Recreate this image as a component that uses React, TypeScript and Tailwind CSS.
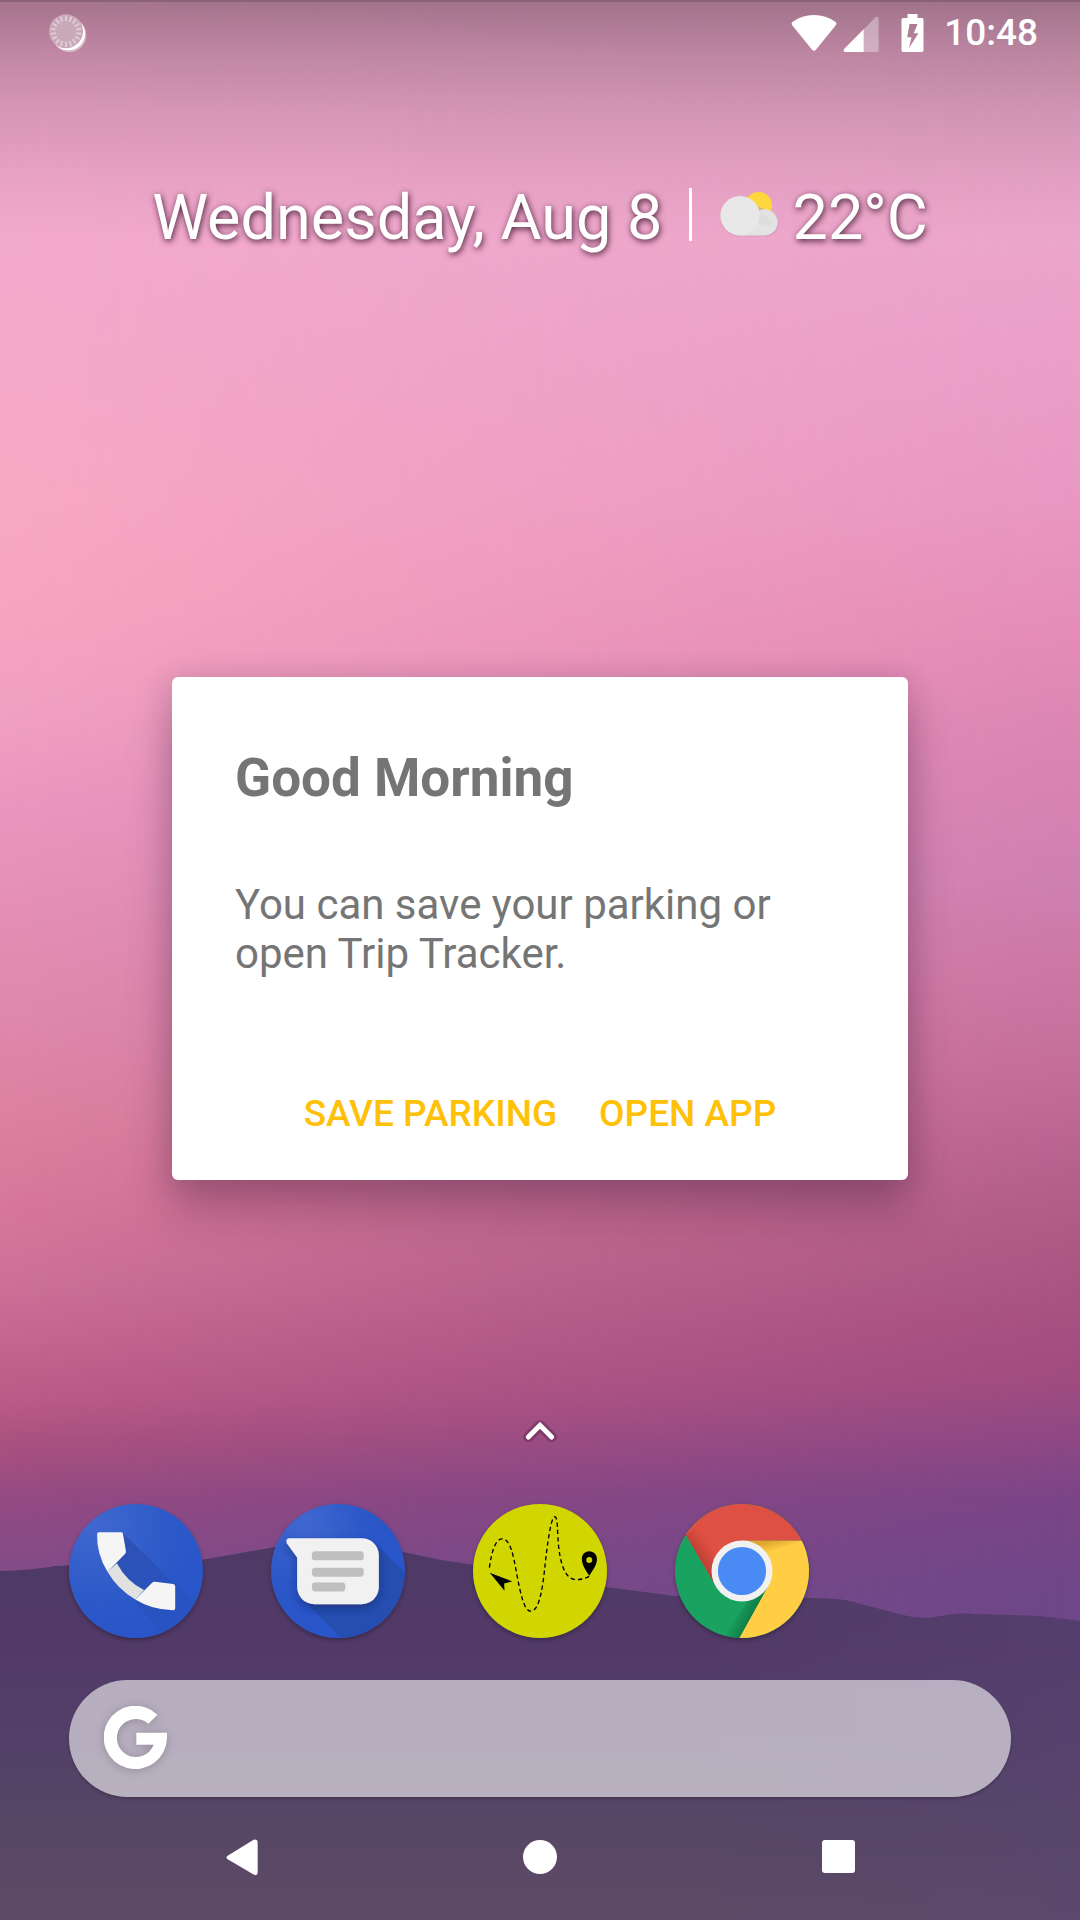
import React from "react";

function Wallpaper() {
  return (
    <div className="absolute inset-0 overflow-hidden" aria-hidden="true">
      <div className="absolute inset-0 bg-[linear-gradient(to_bottom,#eeaacd_0%,#eca6cb_12%,#eba0ca_17%,#e898c3_26%,#e58cb8_33%,#da85b3_39%,#cf80b0_46%,#cb77a4_51%,#c46d9a_56%,#b96390_60%,#ae5b86_64%,#a65081_69%,#9f4c80_72%,#8e4885_75%,#7b4587_78%,#6e4789_83%,#6e4789_100%)]" />
      <div className="absolute inset-0 bg-[linear-gradient(to_bottom,#f4abd0_0%,#f3a9cc_13%,#f4a8c8_19%,#f7a8c2_26%,#f6a6bf_31%,#f0a0c0_37%,#e996bf_42%,#e38eb4_48%,#df88ac_53%,#dc819f_58%,#d67799_63%,#cc7097_67%,#ba5a87_73%,#aa527f_75%,#944a82_78%,#824c88_82%,#824c88_100%)] [mask-image:linear-gradient(to_right,black,rgba(0,0,0,0.5)_45%,transparent)]" />
      <svg className="absolute inset-0 h-full w-full" viewBox="0 0 1080 1920" preserveAspectRatio="none">
        <defs>
          <linearGradient id="hill" x1="0" y1="0" x2="0" y2="1">
            <stop offset="0" stopColor="#4e3965" />
            <stop offset="0.3" stopColor="#523a68" />
            <stop offset="0.55" stopColor="#534068" />
            <stop offset="0.75" stopColor="#574665" />
            <stop offset="1" stopColor="#5d4a66" />
          </linearGradient>
          <linearGradient id="hillTint" x1="0" y1="0" x2="1" y2="0">
            <stop offset="0.4" stopColor="#5a4575" stopOpacity="0" />
            <stop offset="1" stopColor="#5a4575" stopOpacity="0.4" />
          </linearGradient>
        </defs>
        <path id="ridge" fill="url(#hill)" d="M0 1571Q35 1570 55 1566L100 1564Q170 1566 207 1559L275 1547Q330 1532 403 1552L441 1560L475 1565L606 1587L675 1596L813 1598Q840 1598 854 1602L895 1613Q920 1620 935 1617Q955 1612 975 1614L1040 1616L1080 1621V1920H0Z" />
        <path fill="url(#hillTint)" d="M606 1587L675 1596L813 1598Q840 1598 854 1602L895 1613Q920 1620 935 1617Q955 1612 975 1614L1040 1616L1080 1621V1920H432V1700Z" />
      </svg>
      <div className="absolute inset-x-0 top-0 h-[240px] bg-[linear-gradient(to_bottom,rgba(0,0,0,0.33),rgba(0,0,0,0.21)_22%,rgba(0,0,0,0.12)_45%,rgba(0,0,0,0.05)_72%,transparent)]" />
      <div className="absolute inset-x-0 top-0 h-0.5 bg-black/15" />
    </div>
  );
}

function SpinnerIcon() {
  const ticks = Array.from({ length: 18 }, (_, i) => i * 20);
  return (
    <svg className="h-[38px] w-[38px]" viewBox="148 36 114 114" aria-label="Loading">
      <circle cx="209" cy="99" r="51" fill="#fff" fillOpacity="0.45" />
      <circle cx="206" cy="95" r="50" fill="#fff" />
      <circle cx="199" cy="88" r="51" fill="#c9a8b8" />
      {ticks.map((a) => (
        <line key={a} x1="199" y1="41" x2="199" y2="57" stroke="#e0cbd6" strokeWidth="6" transform={`rotate(${a} 199 88)`} />
      ))}
    </svg>
  );
}

function StatusBar() {
  return (
    <header className="flex h-[66px] items-center pr-[42px] pl-[49px] text-white">
      <SpinnerIcon />
      <div className="ml-auto flex items-center">
        <svg className="h-[38px] w-[46px]" viewBox="93 36 138 114" aria-label="Wi-Fi">
          <path fill="#fff" d="M97 60Q126 39 162 39T227 60Q231 64 228 69L167 144Q162 149 157 144L96 69Q93 64 97 60Z" />
        </svg>
        <svg className="ml-1.5 h-[38px] w-9" viewBox="250 36 108 114" aria-label="Mobile signal">
          <path fill="#fff" fillOpacity="0.35" d="M311 83L347 46Q357 41 357 50V145Q357 150 352 150H311Z" />
          <path fill="#fff" d="M312 82V150H256Q249 148 254 140Z" />
        </svg>
        <svg className="ml-[22px] h-[38px] w-[23px]" viewBox="425 36 68 114" aria-label="Battery charging">
          <path fill="#fff" fillRule="evenodd" d="M444 36H474V48H488Q492 48 492 53V145Q492 150 487 150H431Q426 150 426 145V53Q426 48 431 48H444ZM450 66L443 106H456L448 139L477 94H463L474 66Z" />
        </svg>
        <time className="ml-5 text-[37px] leading-[44px] font-medium">10:48</time>
      </div>
    </header>
  );
}

function DateWidget() {
  return (
    <section className="mt-[115px] flex h-[74px] items-center justify-center text-[63px] leading-[74px] text-white [text-shadow:1px_2px_6px_rgba(60,20,45,0.95)]">
      <span>Wednesday, Aug 8</span>
      <span className="mb-2 ml-[26px] h-[53px] w-[3px] bg-white" />
      <svg className="mb-2 ml-7 h-[46px] w-[59px]" viewBox="544 94 176 136" aria-label="Partly cloudy">
        <circle cx="659" cy="136" r="40" fill="#fdd83c" />
        <path fill="#c99ab3" d="M603 110A59 59 0 0 0 603 229H680A39 39 0 0 0 680 150Z" opacity="0.6" />
        <path fill="#e3e3e3" d="M603 226H678A39 39 0 1 0 660 152Z" />
        <circle cx="604" cy="167" r="59" fill="#e8e8e8" />
        <path fill="#d8d8d8" d="M664 152L704 192L690 197L658 190Q665 172 662 156Z" opacity="0.5" />
      </svg>
      <span className="ml-3.5">22°C</span>
    </section>
  );
}

function ParkingDialog() {
  return (
    <div className="pointer-events-none absolute inset-0 z-10 flex items-center justify-center px-6 pb-[63px]">
      <section
        role="dialog"
        aria-labelledby="dialog-title"
        className="pointer-events-auto w-full max-w-[736px] rounded-md bg-white px-[63px] pt-[70px] pb-[41px] text-[#757575] shadow-[0_28px_44px_rgba(50,20,50,0.3),0_0_28px_rgba(50,20,50,0.14)]"
      >
        <h1 id="dialog-title" className="text-[53px] leading-[62px] font-bold">Good Morning</h1>
        <p className="mt-[71px] text-[42px] leading-[49px]">You can save your parking or open Trip Tracker.</p>
        <div className="mt-[111px] flex justify-center gap-[42px] text-[37px] leading-[50px] font-medium text-[#ffc107]">
          <button type="button">SAVE PARKING</button>
          <button type="button">OPEN APP</button>
        </div>
      </section>
    </div>
  );
}

function PhoneIcon() {
  return (
    <svg className="w-full" viewBox="88 72 400 400">
      <defs>
        <radialGradient id="blueA" cx="0.2" cy="0.15" r="0.9">
          <stop offset="0" stopColor="#4068cf" />
          <stop offset="0.6" stopColor="#2d5ac9" />
          <stop offset="1" stopColor="#2855c8" />
        </radialGradient>
        <linearGradient id="phoneShade" gradientUnits="userSpaceOnUse" x1="250" y1="230" x2="410" y2="420">
          <stop offset="0" stopColor="#2748a8" stopOpacity="0.6" />
          <stop offset="1" stopColor="#2748a8" stopOpacity="0.15" />
        </linearGradient>
        <clipPath id="phoneClip"><circle cx="288" cy="272" r="199" /></clipPath>
      </defs>
      <circle cx="288" cy="272" r="200" fill="url(#blueA)" />
      <g clipPath="url(#phoneClip)">
        <path fill="url(#phoneShade)" d="M248 158L480 385L380 470L203 274L256 218Z" />
      </g>
      <path fill="#e1e1e1" d="M203 274L231 249Q260 304 312 329L286 357Q232 325 203 274Z" />
      <path fill="#f5f5f5" d="M177 156H244Q249 156 249 161L258 212Q259 217 255 221L203 274Q170 222 172 161Q172 156 177 156Z" />
      <path fill="#f5f5f5" d="M286 357L336 307Q340 303 345 304L399 311Q405 312 405 318V383Q405 389 399 389Q335 388 286 357Z" />
    </svg>
  );
}

function MessagesIcon() {
  return (
    <svg className="w-full" viewBox="694 72 400 400">
      <defs>
        <radialGradient id="blueB" cx="0.25" cy="0.15" r="0.9">
          <stop offset="0" stopColor="#4068cf" />
          <stop offset="0.5" stopColor="#2b57c8" />
          <stop offset="1" stopColor="#2855c8" />
        </radialGradient>
        <clipPath id="msgClip"><circle cx="894" cy="272" r="199" /></clipPath>
        <filter id="msgShadow" x="-20%" y="-20%" width="140%" height="150%">
          <feDropShadow dx="0" dy="12" stdDeviation="12" floodColor="#10235c" floodOpacity="0.5" />
        </filter>
      </defs>
      <circle cx="894" cy="272" r="200" fill="url(#blueB)" />
      <path clipPath="url(#msgClip)" fill="#254eb0" d="M1003 188L1110 295V480H912L790 358Z" />
      <g clipPath="url(#msgClip)">
        <path filter="url(#msgShadow)" fill="#f1f1f1" d="M748 174H965A51 51 0 0 1 1016 225V320A51 51 0 0 1 965 371H823A51 51 0 0 1 772 320V232L741 189Q737 176 748 174Z" />
      </g>
      <g fill="#bfbfbf">
        <rect x="816" y="213" width="155" height="27" rx="10" />
        <rect x="816" y="262" width="155" height="27" rx="10" />
        <rect x="816" y="306" width="100" height="27" rx="10" />
      </g>
    </svg>
  );
}

function TripTrackerIcon() {
  return (
    <svg className="w-full" viewBox="70 312 400 400">
      <circle cx="270" cy="512" r="200" fill="#d1d600" />
      <path
        fill="none"
        stroke="#000"
        strokeWidth="4"
        strokeDasharray="13 9"
        d="M119 502C126 450 138 416 157 416C182 416 191 468 201 523C211 575 222 632 242 632C270 632 279 552 285 495C292 430 303 350 314 350C324 350 321 400 326 442C334 510 352 538 379 538Q402 537 417 528"
      />
      <path d="M120 517L187 543L163 549L164 571Z" />
      <path fillRule="evenodd" d="M417 453C403 453 395 464 395 476C395 495 408 512 417 526C426 512 440 495 440 476C440 464 431 453 417 453ZM417 470A9 9 0 1 1 417 488A9 9 0 1 1 417 470Z" />
    </svg>
  );
}

function ChromeIcon() {
  return (
    <svg className="w-full" viewBox="676 312 400 400">
      <defs>
        <clipPath id="chromeClip"><circle cx="876" cy="512" r="200" /></clipPath>
        <linearGradient id="redShade" gradientUnits="userSpaceOnUse" x1="745" y1="480" x2="790" y2="450">
          <stop offset="0" stopColor="#a93528" stopOpacity="0.65" />
          <stop offset="1" stopColor="#a93528" stopOpacity="0" />
        </linearGradient>
        <linearGradient id="yellowShade" gradientUnits="userSpaceOnUse" x1="960" y1="422" x2="970" y2="455">
          <stop offset="0" stopColor="#c98a20" stopOpacity="0.6" />
          <stop offset="1" stopColor="#c98a20" stopOpacity="0" />
        </linearGradient>
        <linearGradient id="greenShade" gradientUnits="userSpaceOnUse" x1="915" y1="640" x2="865" y2="615">
          <stop offset="0" stopColor="#0b6b3c" stopOpacity="0.75" />
          <stop offset="1" stopColor="#0b6b3c" stopOpacity="0" />
        </linearGradient>
      </defs>
      <g clipPath="url(#chromeClip)">
        <rect x="676" y="312" width="400" height="400" fill="#1aa260" />
        <path fill="#de5043" d="M676 345L709 405L798 557L876 512V422H1076V312H676Z" />
        <path fill="#ffce44" d="M876 422H1076V712H868L954 557L876 512Z" />
        <path fill="url(#redShade)" d="M709 405L798 557L830 480L780 350Z" />
        <path fill="url(#yellowShade)" d="M876 422H1056L945 458Z" />
        <path fill="url(#greenShade)" d="M868 712L954 557L900 590L820 712Z" />
      </g>
      <circle cx="876" cy="512" r="91" fill="#f1f1f1" />
      <circle cx="876" cy="512" r="72" fill="#4a8af4" />
    </svg>
  );
}

const apps = [
  { name: "Phone", Icon: PhoneIcon },
  { name: "Messages", Icon: MessagesIcon },
  { name: "Trip Tracker", Icon: TripTrackerIcon },
  { name: "Chrome", Icon: ChromeIcon },
];

function Dock() {
  return (
    <nav aria-label="Favourite apps" className="grid grid-cols-5 gap-[68px] px-[69px]">
      {apps.map(({ name, Icon }) => (
        <button key={name} type="button" aria-label={name} className="rounded-full shadow-[0_2px_4px_rgba(0,0,0,0.3)]">
          <Icon />
        </button>
      ))}
    </nav>
  );
}

function SearchBar() {
  return (
    <form className="mx-[69px] mt-[42px] flex h-[117px] items-center rounded-full bg-[#fafafa]/60 pl-[35px] shadow-[0_2px_3px_rgba(0,0,0,0.2)]">
      <button type="button" aria-label="Google" className="mb-0.5">
        <svg className="h-16 w-16 drop-shadow-[0_1px_5px_rgba(0,0,0,0.2)]" viewBox="190 166 190 192">
          <path fill="#fff" d="M349 192A95 95 0 1 0 378 262V246H286V282H338A57 57 0 1 1 322 219Z" />
        </svg>
      </button>
      <input aria-label="Search" type="text" className="h-full min-w-0 flex-1 bg-transparent px-6 text-[42px] text-white outline-none" />
    </form>
  );
}

function NavigationBar() {
  return (
    <nav aria-label="System navigation" className="flex h-[123px] items-center justify-center gap-[206px] pb-1">
      <button type="button" aria-label="Back" className="flex h-[92px] w-[92px] items-center justify-center">
        <svg className="h-9 w-8" viewBox="555 566 96 108">
          <path fill="#fff" d="M638 568Q650 565 650 577V666Q650 677 639 673L560 627Q553 621 560 616Z" />
        </svg>
      </button>
      <button type="button" aria-label="Home" className="flex h-[92px] w-[92px] items-center justify-center">
        <span className="h-[34px] w-[34px] rounded-full bg-white" />
      </button>
      <button type="button" aria-label="Recent apps" className="flex h-[92px] w-[92px] items-center justify-center">
        <span className="h-[33px] w-[33px] rounded-[3px] bg-white" />
      </button>
    </nav>
  );
}

export default function App() {
  return (
    <div className="relative min-h-screen overflow-hidden bg-[#e597bd] font-[Roboto,sans-serif]">
      <Wallpaper />
      <div className="relative flex min-h-screen flex-col">
        <StatusBar />
        <DateWidget />
        <main className="flex flex-1 flex-col items-center justify-end pb-[61px]">
          <button type="button" aria-label="All apps">
            <svg className="h-6 w-9" viewBox="216 58 108 72">
              <path d="M235 112L270 77L305 112" fill="none" stroke="#6b2f5c" strokeOpacity="0.6" strokeWidth="31" strokeLinecap="round" strokeLinejoin="round" />
              <path d="M235 112L270 77L305 112" fill="none" stroke="#fff" strokeWidth="15" strokeLinecap="round" />
            </svg>
          </button>
        </main>
        <Dock />
        <SearchBar />
        <NavigationBar />
      </div>
      <ParkingDialog />
    </div>
  );
}
